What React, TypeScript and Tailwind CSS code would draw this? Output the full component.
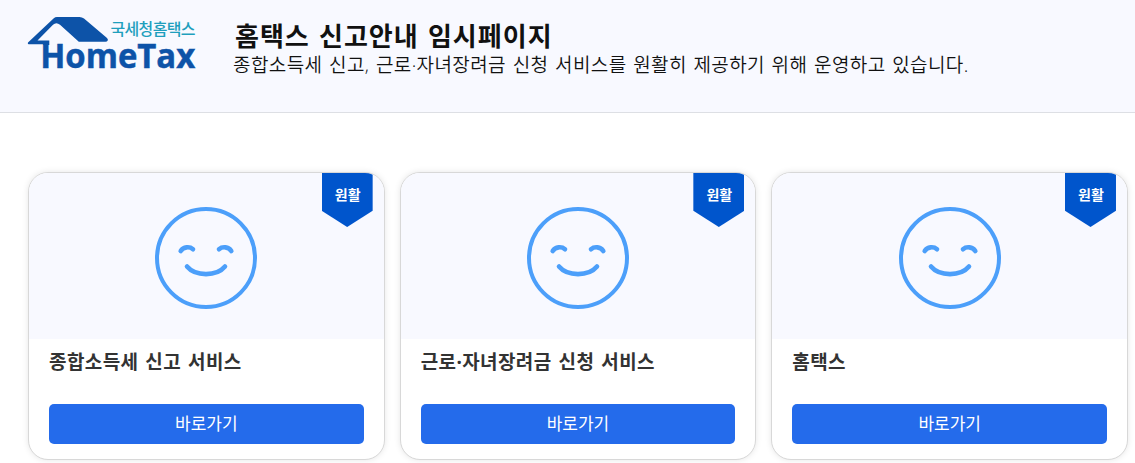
const services = [
  { id: 'income', title: '종합소득세 신고 서비스', status: '원활' },
  { id: 'incentive', title: '근로·자녀장려금 신청 서비스', status: '원활' },
  { id: 'hometax', title: '홈택스', status: '원활' },
]

function Logo() {
  return (
    <svg width="170" height="72" viewBox="0 0 170 72" className="shrink-0 overflow-visible" aria-label="HomeTax">
      <path
        fill="#0d53a8"
        d="M0 27.4 L25.5 3.4 Q27.2 2 29 2 H51.5 Q54 2 56 3.6 L79 23 Q80.5 24.5 79.6 25.8 Q79 26.7 77.5 26.7 H50.8 L32 9.8 Q28.3 6.6 25 9.8 L9.5 25.4 H21.3 V30 H15.3 V29.2 H1.5 Q-0.8 29.2 0 27.4 Z"
      />
      <text x="82.5" y="19.6" fill="#1f9fbd" fontSize="16" fontWeight="500" textLength="85" className="font-['Noto_Sans_CJK_KR',sans-serif]">
        국세청홈택스
      </text>
      <text x="12.2" y="52.8" fill="#0d53a8" stroke="#0d53a8" strokeWidth="0.5" fontSize="34.8" fontWeight="700" textLength="155" lengthAdjust="spacingAndGlyphs" className="font-['Open_Sans',sans-serif]">
        HomeTax
      </text>
    </svg>
  )
}

function SmileIcon() {
  return (
    <svg width="104" height="104" viewBox="0 0 104 104" fill="none" stroke="#4c9ffa" strokeWidth="4" strokeLinecap="round">
      <circle cx="52" cy="52" r="49" />
      <g strokeWidth="4.6">
        <path d="M26.7 45 C29.5 40.7 35.5 40.2 39 43.2" />
        <path d="M65 43.2 C68.5 40.2 74.5 40.7 77.3 45" />
        <path d="M33 60.5 C41.5 70.6 62.5 70.6 71 60.5" />
      </g>
    </svg>
  )
}

function ServiceCard({ title, status }: { title: string; status: string }) {
  return (
    <li className="relative h-72 overflow-hidden rounded-[20px] border border-[#d8d8d8] bg-white shadow-[0_0_6px_rgba(0,0,0,0.1)]">
      <div className="flex h-[166px] items-center justify-center bg-[#f8f9ff] pt-1">
        <SmileIcon />
      </div>
      <span className="absolute top-0 right-[11px] h-[54px] w-[51px] bg-[#0055cc] pt-3 pl-px text-center text-sm leading-5 font-bold text-white [clip-path:polygon(0_0,100%_0,100%_70%,50%_100%,0_70%)]">
        {status}
      </span>
      <div className="px-5 pt-[9px]">
        <h2 className="text-[19px] leading-7 font-bold tracking-[0.4px] [word-spacing:1.6px] text-[#333]">{title}</h2>
        <button type="button" className="mt-7 block h-10 w-full rounded-[5px] bg-[#246beb] text-[17px] leading-10 text-white">
          바로가기
        </button>
      </div>
    </li>
  )
}

export default function App() {
  return (
    <div className="h-[463px] overflow-hidden bg-white font-['Open_Sans','Noto_Sans_CJK_KR',sans-serif]">
      <header className="flex h-[113px] border-b border-[#dddfe4] bg-[#f8f9ff] pt-[15px] pl-7">
        <Logo />
        <div className="pl-[35px] whitespace-nowrap text-[#111]">
          <h1 className="mt-[5px] pl-0.5 text-[26px] leading-8 font-bold tracking-[1px] [word-spacing:1.5px]">홈택스 신고안내 임시페이지</h1>
          <p className="text-[19px] leading-[26px] font-[350] tracking-[0.4px] [word-spacing:1.3px]">
            종합소득세 신고, 근로·자녀장려금 신청 서비스를 원활히 제공하기 위해 운영하고 있습니다.
          </p>
        </div>
      </header>
      <main className="px-7 pt-[59px]">
        <ul className="grid w-[1100px] grid-cols-3 gap-[15px]">
          {services.map((service) => (
            <ServiceCard key={service.id} title={service.title} status={service.status} />
          ))}
        </ul>
      </main>
    </div>
  )
}
